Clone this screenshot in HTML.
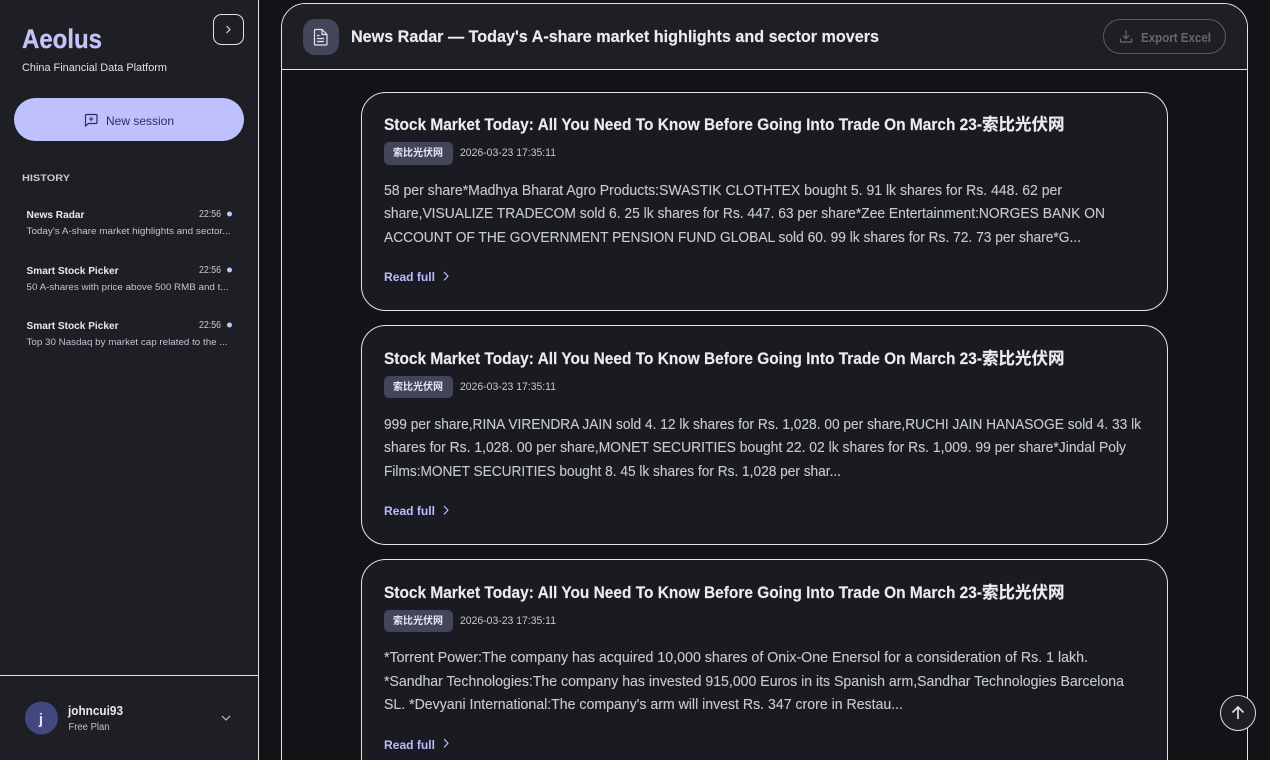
<!DOCTYPE html>
<html lang="en"><head><meta charset="utf-8"><title>Aeolus</title>
<style>
html,body{margin:0;padding:0;width:1270px;height:760px;overflow:hidden;background:#121317}
svg{display:block;width:1270px;height:760px;overflow:hidden}
text{font-family:"Liberation Sans","Noto Sans CJK SC",sans-serif}
.t{font-size:16.5px;font-weight:700;fill:#ebebf2;stroke:#ebebf2;stroke-width:.15px}
.b{font-size:14.5px;fill:#c6c8d2;stroke:#c6c8d2;stroke-width:.12px}
.d{font-size:11px;fill:#c6c8d2}
.r{font-size:12px;font-weight:700;fill:#b6bcff}
.g{font-size:10px;font-weight:700;fill:#e6e6f2}
.hn{font-size:10.5px;font-weight:700;fill:#e8e8ee}
.ht{font-size:10px;fill:#c8c9d4}
.hs{font-size:9.5px;fill:#c2c4d2}
</style></head><body>
<svg width="1270" height="760" viewBox="0 0 1270 760" xmlns="http://www.w3.org/2000/svg">
<rect width="1270" height="760" fill="#121317"/>
<!-- sidebar -->
<rect width="258" height="760" fill="#1e1f25"/>
<rect x="258" width="1" height="760" fill="#e4e4e8"/>
<rect y="675" width="258" height="1" fill="#e4e4e8"/>
<text x="22" y="48" font-size="27" font-weight="700" fill="#c5c3f5" stroke="#c5c3f5" stroke-width=".3" textLength="80" lengthAdjust="spacingAndGlyphs">Aeolus</text>
<text x="22" y="71" font-size="11" fill="#dfe0ea" textLength="145" lengthAdjust="spacingAndGlyphs">China Financial Data Platform</text>
<rect x="213.500" y="14.500" width="30" height="30" rx="8" fill="none" stroke="#e4e4e8"/>
<path d="M226.500 26l3.500 3.500-3.500 3.500" fill="none" stroke="#dcdce2" stroke-width="1.100"/>
<rect x="14" y="98" width="230" height="43" rx="21.500" fill="#bfc1ff"/>
<path d="M85.500 115.500a1 1 0 0 1 1-1h9.500a1 1 0 0 1 1 1v7a1 1 0 0 1-1 1h-7.500l-3 2.500z" fill="none" stroke="#2b2e66" stroke-width="1.200"/>
<path d="M91.200 116.800v4.500M89 119h4.500" stroke="#2b2e66" stroke-width="1.100"/>
<text x="106" y="125" font-size="12" fill="#2b2e66" textLength="68" lengthAdjust="spacingAndGlyphs">New session</text>
<text x="22" y="181" font-size="9.500" font-weight="700" fill="#c8c9d6" textLength="48" lengthAdjust="spacingAndGlyphs">HISTORY</text>

<text x="26.500" y="218" class="hn" textLength="58" lengthAdjust="spacingAndGlyphs">News Radar</text>
<text x="199" y="217" class="ht" textLength="22" lengthAdjust="spacingAndGlyphs">22:56</text>
<circle cx="229.500" cy="214" r="2.500" fill="#c0c2ff"/>
<text x="26.500" y="234" class="hs" textLength="204" lengthAdjust="spacingAndGlyphs">Today's A-share market highlights and sector...</text>

<text x="26.500" y="274" class="hn" textLength="92" lengthAdjust="spacingAndGlyphs">Smart Stock Picker</text>
<text x="199" y="273" class="ht" textLength="22" lengthAdjust="spacingAndGlyphs">22:56</text>
<circle cx="229.500" cy="270" r="2.500" fill="#c0c2ff"/>
<text x="26.500" y="290" class="hs" textLength="202" lengthAdjust="spacingAndGlyphs">50 A-shares with price above 500 RMB and t...</text>

<text x="26.500" y="329" class="hn" textLength="92" lengthAdjust="spacingAndGlyphs">Smart Stock Picker</text>
<text x="199" y="328" class="ht" textLength="22" lengthAdjust="spacingAndGlyphs">22:56</text>
<circle cx="229.500" cy="325" r="2.500" fill="#c0c2ff"/>
<text x="26.500" y="345" class="hs" textLength="201" lengthAdjust="spacingAndGlyphs">Top 30 Nasdaq by market cap related to the ...</text>

<circle cx="41.500" cy="718" r="16.500" fill="#43477f"/>
<text x="41" y="724" font-size="15" font-weight="700" fill="#dfe2ff" text-anchor="middle">j</text>
<text x="68" y="715" font-size="12.500" font-weight="700" fill="#e8e8ee" textLength="55" lengthAdjust="spacingAndGlyphs">johncui93</text>
<text x="68.500" y="730" font-size="10" fill="#bfc1cc" textLength="41" lengthAdjust="spacingAndGlyphs">Free Plan</text>
<path d="M222 716l4 4 4-4" fill="none" stroke="#c9cad2" stroke-width="1.100"/>

<!-- main panel -->
<path d="M281.500 760V27.500a24 24 0 0 1 24-24h918a24 24 0 0 1 24 24V760" fill="#121317" stroke="#e4e4e8"/>
<path d="M282 69V27.500a23.500 23.500 0 0 1 23.500-23.500h918a23.500 23.500 0 0 1 23.500 23.500V69z" fill="#1e1f25"/>
<rect x="282" y="69" width="965" height="1" fill="#e4e4e8"/>
<rect x="303" y="19" width="36" height="36" rx="12" fill="#44455a"/>
<path d="M315.500 29.500h6.500l5 5v9.500a1 1 0 0 1-1 1h-10.500a1 1 0 0 1-1-1v-13.500a1 1 0 0 1 1-1z" fill="none" stroke="#e3e3ec" stroke-width="1.200"/>
<path d="M322 29.500v5h5M317 35.500h2.500M317 38.500h7M317 41.500h7" fill="none" stroke="#e3e3ec" stroke-width="1.200"/>
<text x="351" y="42" font-size="16.500" font-weight="700" fill="#ebebf2" stroke="#ebebf2" stroke-width=".15" textLength="528" lengthAdjust="spacingAndGlyphs">News Radar — Today's A-share market highlights and sector movers</text>
<rect x="1103.500" y="19.500" width="122" height="34" rx="17" fill="none" stroke="#5c5d64"/>
<path d="M1126 30.500v8M1122.800 35.500l3.200 3.200 3.200-3.200M1120.500 38.500v3.500h11v-3.500" fill="none" stroke="#686970" stroke-width="1.200"/>
<text x="1141" y="42" font-size="12.500" font-weight="700" fill="#66676e" textLength="70" lengthAdjust="spacingAndGlyphs">Export Excel</text>

<!-- card 1 -->
<rect x="361.500" y="92.500" width="806" height="218" rx="24" fill="#1a1b21" stroke="#e4e4e8"/>
<text x="384" y="130" class="t" textLength="598" lengthAdjust="spacingAndGlyphs">Stock Market Today: All You Need To Know Before Going Into Trade On March 23-</text>
<text x="982" y="130" class="t">索比光伏网</text>
<rect x="384" y="142" width="69" height="23" rx="5" fill="#44455a"/>
<text x="393" y="156" class="g">索比光伏网</text>
<text x="460" y="156" class="d" textLength="96" lengthAdjust="spacingAndGlyphs">2026-03-23 17:35:11</text>
<text x="384" y="195" class="b" textLength="678" lengthAdjust="spacingAndGlyphs">58 per share*Madhya Bharat Agro Products:SWASTIK CLOTHTEX bought 5. 91 lk shares for Rs. 448. 62 per</text>
<text x="384" y="218" class="b" textLength="721" lengthAdjust="spacingAndGlyphs">share,VISUALIZE TRADECOM sold 6. 25 lk shares for Rs. 447. 63 per share*Zee Entertainment:NORGES BANK ON</text>
<text x="384" y="242" class="b" textLength="697" lengthAdjust="spacingAndGlyphs">ACCOUNT OF THE GOVERNMENT PENSION FUND GLOBAL sold 60. 99 lk shares for Rs. 72. 73 per share*G...</text>
<text x="384" y="281" class="r" textLength="51" lengthAdjust="spacingAndGlyphs">Read full</text>
<path d="M444 272l4 4.200-4 4.200" fill="none" stroke="#c5c8f5" stroke-width="1.100"/>

<!-- card 2 -->
<rect x="361.500" y="325.500" width="806" height="219" rx="24" fill="#1a1b21" stroke="#e4e4e8"/>
<text x="384" y="364" class="t" textLength="598" lengthAdjust="spacingAndGlyphs">Stock Market Today: All You Need To Know Before Going Into Trade On March 23-</text>
<text x="982" y="364" class="t">索比光伏网</text>
<rect x="384" y="376" width="69" height="22" rx="5" fill="#44455a"/>
<text x="393" y="390" class="g">索比光伏网</text>
<text x="460" y="390" class="d" textLength="96" lengthAdjust="spacingAndGlyphs">2026-03-23 17:35:11</text>
<text x="384" y="429" class="b" textLength="757" lengthAdjust="spacingAndGlyphs">999 per share,RINA VIRENDRA JAIN sold 4. 12 lk shares for Rs. 1,028. 00 per share,RUCHI JAIN HANASOGE sold 4. 33 lk</text>
<text x="384" y="452" class="b" textLength="742" lengthAdjust="spacingAndGlyphs">shares for Rs. 1,028. 00 per share,MONET SECURITIES bought 22. 02 lk shares for Rs. 1,009. 99 per share*Jindal Poly</text>
<text x="384" y="476" class="b" textLength="457" lengthAdjust="spacingAndGlyphs">Films:MONET SECURITIES bought 8. 45 lk shares for Rs. 1,028 per shar...</text>
<text x="384" y="515" class="r" textLength="51" lengthAdjust="spacingAndGlyphs">Read full</text>
<path d="M444 506l4 4.200-4 4.200" fill="none" stroke="#c5c8f5" stroke-width="1.100"/>

<!-- card 3 -->
<path d="M361.500 760V583.500a24 24 0 0 1 24-24h758a24 24 0 0 1 24 24V760" fill="#1a1b21" stroke="#e4e4e8"/>
<text x="384" y="598" class="t" textLength="598" lengthAdjust="spacingAndGlyphs">Stock Market Today: All You Need To Know Before Going Into Trade On March 23-</text>
<text x="982" y="598" class="t">索比光伏网</text>
<rect x="384" y="610" width="69" height="22" rx="5" fill="#44455a"/>
<text x="393" y="624" class="g">索比光伏网</text>
<text x="460" y="624" class="d" textLength="96" lengthAdjust="spacingAndGlyphs">2026-03-23 17:35:11</text>
<text x="384" y="662" class="b" textLength="704" lengthAdjust="spacingAndGlyphs">*Torrent Power:The company has acquired 10,000 shares of Onix-One Enersol for a consideration of Rs. 1 lakh.</text>
<text x="384" y="686" class="b" textLength="740" lengthAdjust="spacingAndGlyphs">*Sandhar Technologies:The company has invested 915,000 Euros in its Spanish arm,Sandhar Technologies Barcelona</text>
<text x="384" y="709" class="b" textLength="519" lengthAdjust="spacingAndGlyphs">SL. *Devyani International:The company's arm will invest Rs. 347 crore in Restau...</text>
<text x="384" y="749" class="r" textLength="51" lengthAdjust="spacingAndGlyphs">Read full</text>
<path d="M444 739l4 4.200-4 4.200" fill="none" stroke="#c5c8f5" stroke-width="1.100"/>

<!-- scroll top -->
<circle cx="1238" cy="713" r="17.500" fill="#1e1f25" stroke="#dcdce2"/>
<path d="M1238 719v-11.500M1232.500 712.500l5.500-5.500 5.500 5.500" fill="none" stroke="#dcdce2" stroke-width="1.700"/>
</svg>
</body></html>
